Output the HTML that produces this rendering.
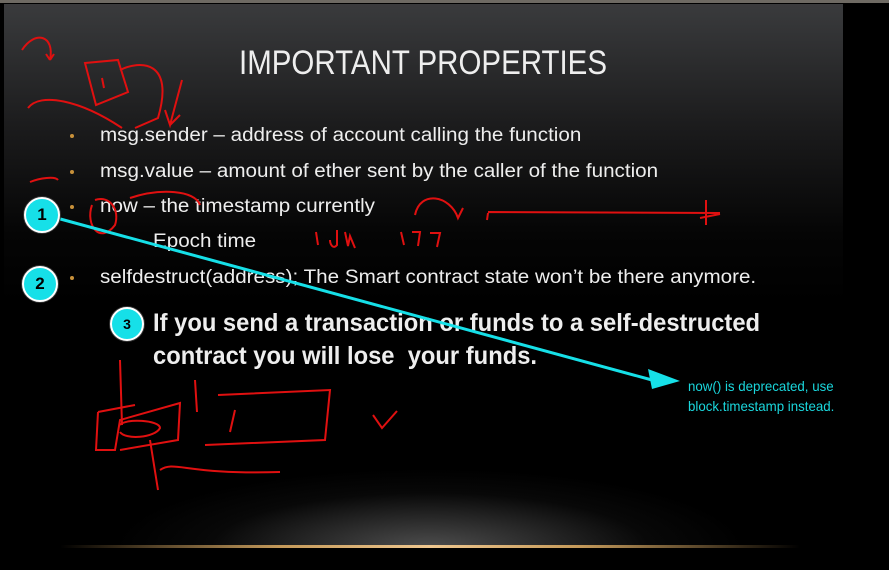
<!DOCTYPE html>
<html><head><meta charset="utf-8"><style>
html,body{margin:0;padding:0;width:889px;height:570px;overflow:hidden;background:#000;font-family:"Liberation Sans",sans-serif}
#slide{position:absolute;left:4px;top:4px;width:839px;height:566px;background:linear-gradient(#3a3b3d 0px,#1c1c1d 120px,#050505 230px,#000 300px)}
#top{position:absolute;left:0;top:0;width:889px;height:3px;background:#6e6a63}
.t{position:absolute;color:#eee;white-space:nowrap;transform-origin:0 0}
.b{position:absolute;width:4px;height:4px;border-radius:50%;background:#c8913a}
.glow{position:absolute;left:120px;top:470px;width:620px;height:78px;background:radial-gradient(ellipse at 50% 100%,rgba(130,130,130,.6),rgba(40,40,40,.2) 50%,rgba(0,0,0,0) 72%)}
.line{position:absolute;left:60px;top:545px;width:740px;height:3px;background:linear-gradient(90deg,rgba(0,0,0,0),#c59a5a 30%,#f0c890 50%,#c59a5a 70%,rgba(0,0,0,0))}
.c{position:absolute;border-radius:50%;background:#16e0e8;border:2px solid #fff;box-shadow:0 0 0 1px #333;color:#000;font-weight:bold;text-align:center}
</style></head><body>
<div id="top"></div>
<div id="slide"></div>
<div class="glow"></div>
<div class="line"></div>
<div class="t" style="left:239px;top:44px;font-size:34px;transform:scaleX(.867)">IMPORTANT PROPERTIES</div>
<div class="b" style="left:70px;top:134px"></div>
<div class="b" style="left:70px;top:170px"></div>
<div class="b" style="left:70px;top:205px"></div>
<div class="b" style="left:70px;top:276px"></div>
<div class="t" style="left:100px;top:125px;font-size:19px;transform:scaleX(1.085)">msg.sender – address of account calling the function</div>
<div class="t" style="left:100px;top:161px;font-size:19px;transform:scaleX(1.085)">msg.value – amount of ether sent by the caller of the function</div>
<div class="t" style="left:100px;top:196px;font-size:19px;transform:scaleX(1.085)">now – the timestamp currently</div>
<div class="t" style="left:153px;top:231px;font-size:19px;transform:scaleX(1.085)">Epoch time</div>
<div class="t" style="left:100px;top:267px;font-size:19px;transform:scaleX(1.085)">selfdestruct(address); The Smart contract state won’t be there anymore.</div>
<div class="t" style="left:153px;top:307px;font-size:25px;font-weight:bold;transform:scaleX(.95);line-height:33px">If you send a transaction or funds to a self-destructed<br>contract you will lose&nbsp; your funds.</div>
<div class="t" style="left:688px;top:376px;font-size:14px;color:#1ad6dc;line-height:20px;transform:scaleX(.95)">now() is deprecated, use<br>block.timestamp instead.</div>
<svg width="889" height="570" style="position:absolute;left:0;top:0" fill="none" stroke="#e01010" stroke-width="2">
<path d="M22 50 C35 30 55 35 50 60"/><path d="M50 60 l-4 -6 M50 60 l4 -6"/>
<path d="M85 63 L118 60 L128 92 L96 105 Z"/><path d="M102 78 l2 10"/>
<path d="M120 70 C140 60 175 60 158 118 L135 128"/>
<path d="M28 108 C40 92 80 100 122 128"/><path d="M182 80 L170 125 L165 110 M170 125 l10 -10"/>
<path d="M30 182 C40 178 55 176 58 180"/>
<path d="M92 205 C85 225 100 245 115 225 C120 210 110 195 95 200"/>
<path d="M130 198 C160 188 195 190 200 205"/>
<path d="M415 215 C420 190 450 195 458 218 l5 -10"/>
<path d="M487 220 L488 213 M488 212 L720 213 M706 200 L706 225 M700 218 L720 214"/>
<path d="M316 232 L318 245 M337 230 L337 245 C333 250 330 244 330 240 M345 232 L348 246 L350 236 L355 248"/>
<path d="M401 232 L404 245 M412 232 L420 232 L418 246 M430 233 L440 233 L437 247"/>
<path d="M98 412 L96 450 L115 450 L120 420 L180 403 L178 440 L120 450 M98 412 L135 405"/>
<path d="M120 425 C125 418 160 420 160 428 C155 438 125 440 120 432"/>
<path d="M120 360 L122 425 M195 380 L197 412"/>
<path d="M218 395 L330 390 L325 440 L205 445"/>
<path d="M235 410 L230 432"/><path d="M150 440 L158 490 M160 470 C175 460 185 475 280 472"/>
<path d="M373 415 L382 428 L397 411"/>
</svg>
<svg width="889" height="570" style="position:absolute;left:0;top:0">
<line x1="42" y1="214" x2="652" y2="380" stroke="#16e0e8" stroke-width="3"/>
<polygon points="680,381 648,369 652,389" fill="#16e0e8"/>
</svg>
<div class="c" style="left:24px;top:197px;width:32px;height:32px;line-height:32px;font-size:17px">1</div>
<div class="c" style="left:22px;top:266px;width:32px;height:32px;line-height:32px;font-size:17px">2</div>
<div class="c" style="left:110px;top:307px;width:30px;height:30px;line-height:30px;font-size:14px">3</div>
</body></html>
